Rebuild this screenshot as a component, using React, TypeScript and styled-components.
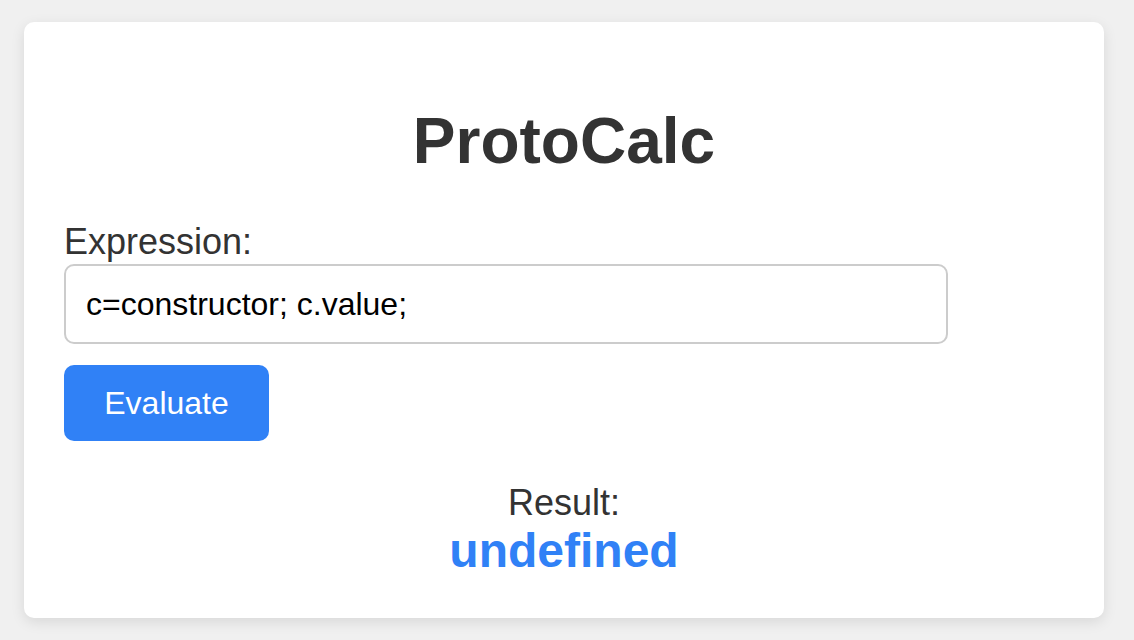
import React from "react";
import styled, { createGlobalStyle } from "styled-components";

const GlobalStyle = createGlobalStyle`
  html, body {
    margin: 0;
    padding: 0;
    background: #f0f0f0;
    font-family: "Liberation Sans", Arial, sans-serif;
  }
  body {
    padding: 22px 30px 22px 24px;
  }
`;

const Card = styled.div`
  box-sizing: border-box;
  width: 1080px;
  background: #ffffff;
  border-radius: 10px;
  box-shadow: 0 4px 14px rgba(0, 0, 0, 0.1);
  padding: 40px;
  color: #333333;
`;

const Title = styled.h1`
  font-size: 64px;
  line-height: 74px;
  font-weight: bold;
  text-align: center;
  margin: 42px 0 43px;
  color: #333333;
`;

const Label = styled.label`
  display: block;
  font-size: 36px;
  line-height: 42px;
  margin-bottom: 1px;
  color: #333333;
`;

const Input = styled.input`
  display: block;
  box-sizing: border-box;
  width: 884px;
  height: 80px;
  padding: 0 20px;
  font-family: "Liberation Sans", Arial, sans-serif;
  font-size: 32px;
  color: #000000;
  border: 2px solid #cccccc;
  border-radius: 10px;
  outline: none;
  background: #ffffff;
`;

const Button = styled.button`
  display: block;
  margin-top: 21px;
  width: 205px;
  height: 76px;
  padding: 0;
  font-family: "Liberation Sans", Arial, sans-serif;
  font-size: 32px;
  color: #ffffff;
  background: #3081f6;
  border: none;
  border-radius: 10px;
  cursor: pointer;
`;

const Result = styled.div`
  margin-top: 41px;
  text-align: center;
`;

const ResultLabel = styled.div`
  font-size: 36px;
  line-height: 41px;
  color: #333333;
`;

const ResultValue = styled.div`
  font-size: 48px;
  line-height: 55px;
  font-weight: bold;
  color: #3081f6;
`;

export default function App() {
  return (
    <>
      <GlobalStyle />
      <Card>
        <Title>ProtoCalc</Title>
        <Label htmlFor="expr">Expression:</Label>
        <Input id="expr" type="text" defaultValue="c=constructor; c.value;" />
        <Button>Evaluate</Button>
        <Result>
          <ResultLabel>Result:</ResultLabel>
          <ResultValue>undefined</ResultValue>
        </Result>
      </Card>
    </>
  );
}
